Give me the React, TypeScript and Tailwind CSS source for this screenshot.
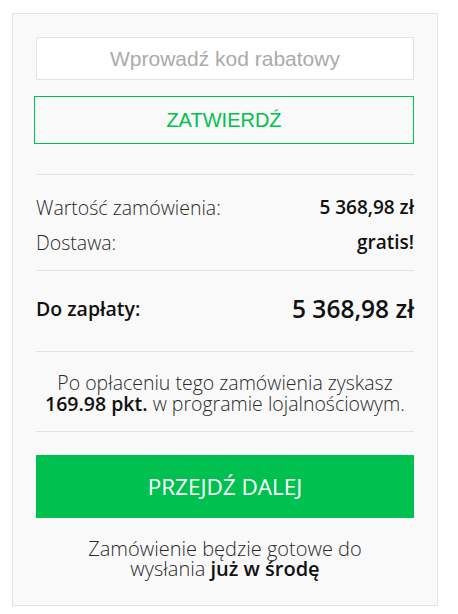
import { useState } from 'react';

const sans = "font-['Open_Sans','Noto_Sans',sans-serif]";
const arial = "font-['Liberation_Sans',Arial,sans-serif]";

export default function App() {
  const [code, setCode] = useState('');

  return (
    <div className="w-[458px] h-[614px] bg-white pt-[13px] pl-[12px]">
      <div className="w-[426px] h-[593px] bg-[#f9f9f9] border border-[#e3e3e3] px-[23px] pt-[23px]">
        <input
          value={code}
          onChange={e => setCode(e.target.value)}
          placeholder="Wprowadź kod rabatowy"
          className={`block w-[378px] h-[43px] bg-white border border-[#e3e3e3] text-center text-[21px] text-[#333] placeholder:text-[#aaa] outline-none ${arial}`}
        />
        <button
          className={`block mt-[16px] -ml-[2px] w-[380px] h-[48px] border border-[#00c050] bg-[#f9f9f9] text-[#00c050] text-[20px] ${arial}`}
        >
          ZATWIERDŹ
        </button>

        <div className={`${sans} text-[#2a2a2a]`}>
          <div className="mt-[30px] border-t border-[#e3e3e3] pt-[15px] pb-[10px]">
            <div className="flex items-center justify-between h-[35px]">
              <span className="text-[19.5px] font-light">Wartość zamówienia:</span>
              <span className="text-[19px] font-semibold text-[#111]">5 368,98 zł</span>
            </div>
            <div className="flex items-center justify-between h-[35px]">
              <span className="text-[19.5px] font-light">Dostawa:</span>
              <span className="text-[19px] font-semibold text-[#111]">gratis!</span>
            </div>
          </div>

          <div className="border-t border-[#e3e3e3] pt-[22px] pb-[26px]">
            <div className="flex items-center justify-between h-[32px]">
              <span className="text-[19.5px] font-semibold text-[#111]">Do zapłaty:</span>
              <span className="text-[24.5px] font-semibold text-[#111]">5 368,98 zł</span>
            </div>
          </div>

          <div className="border-t border-b border-[#e3e3e3] pt-[20px] pb-[17px] text-center text-[19.5px] leading-[21px] font-light">
            Po opłaceniu tego zamówienia zyskasz
            <br />
            <span className="font-semibold text-[#111]">169.98 pkt.</span> w programie lojalnościowym.
          </div>

          <button className="block w-full mt-[23px] h-[63px] bg-[#00c150] text-white text-[22.5px]">
            PRZEJDŹ DALEJ
          </button>

          <p className="mt-[21px] text-center text-[20px] leading-[20px] font-light">
            Zamówienie będzie gotowe do
            <br />
            wysłania <span className="font-semibold text-[#111]">już w środę</span>
          </p>
        </div>
      </div>
    </div>
  );
}
